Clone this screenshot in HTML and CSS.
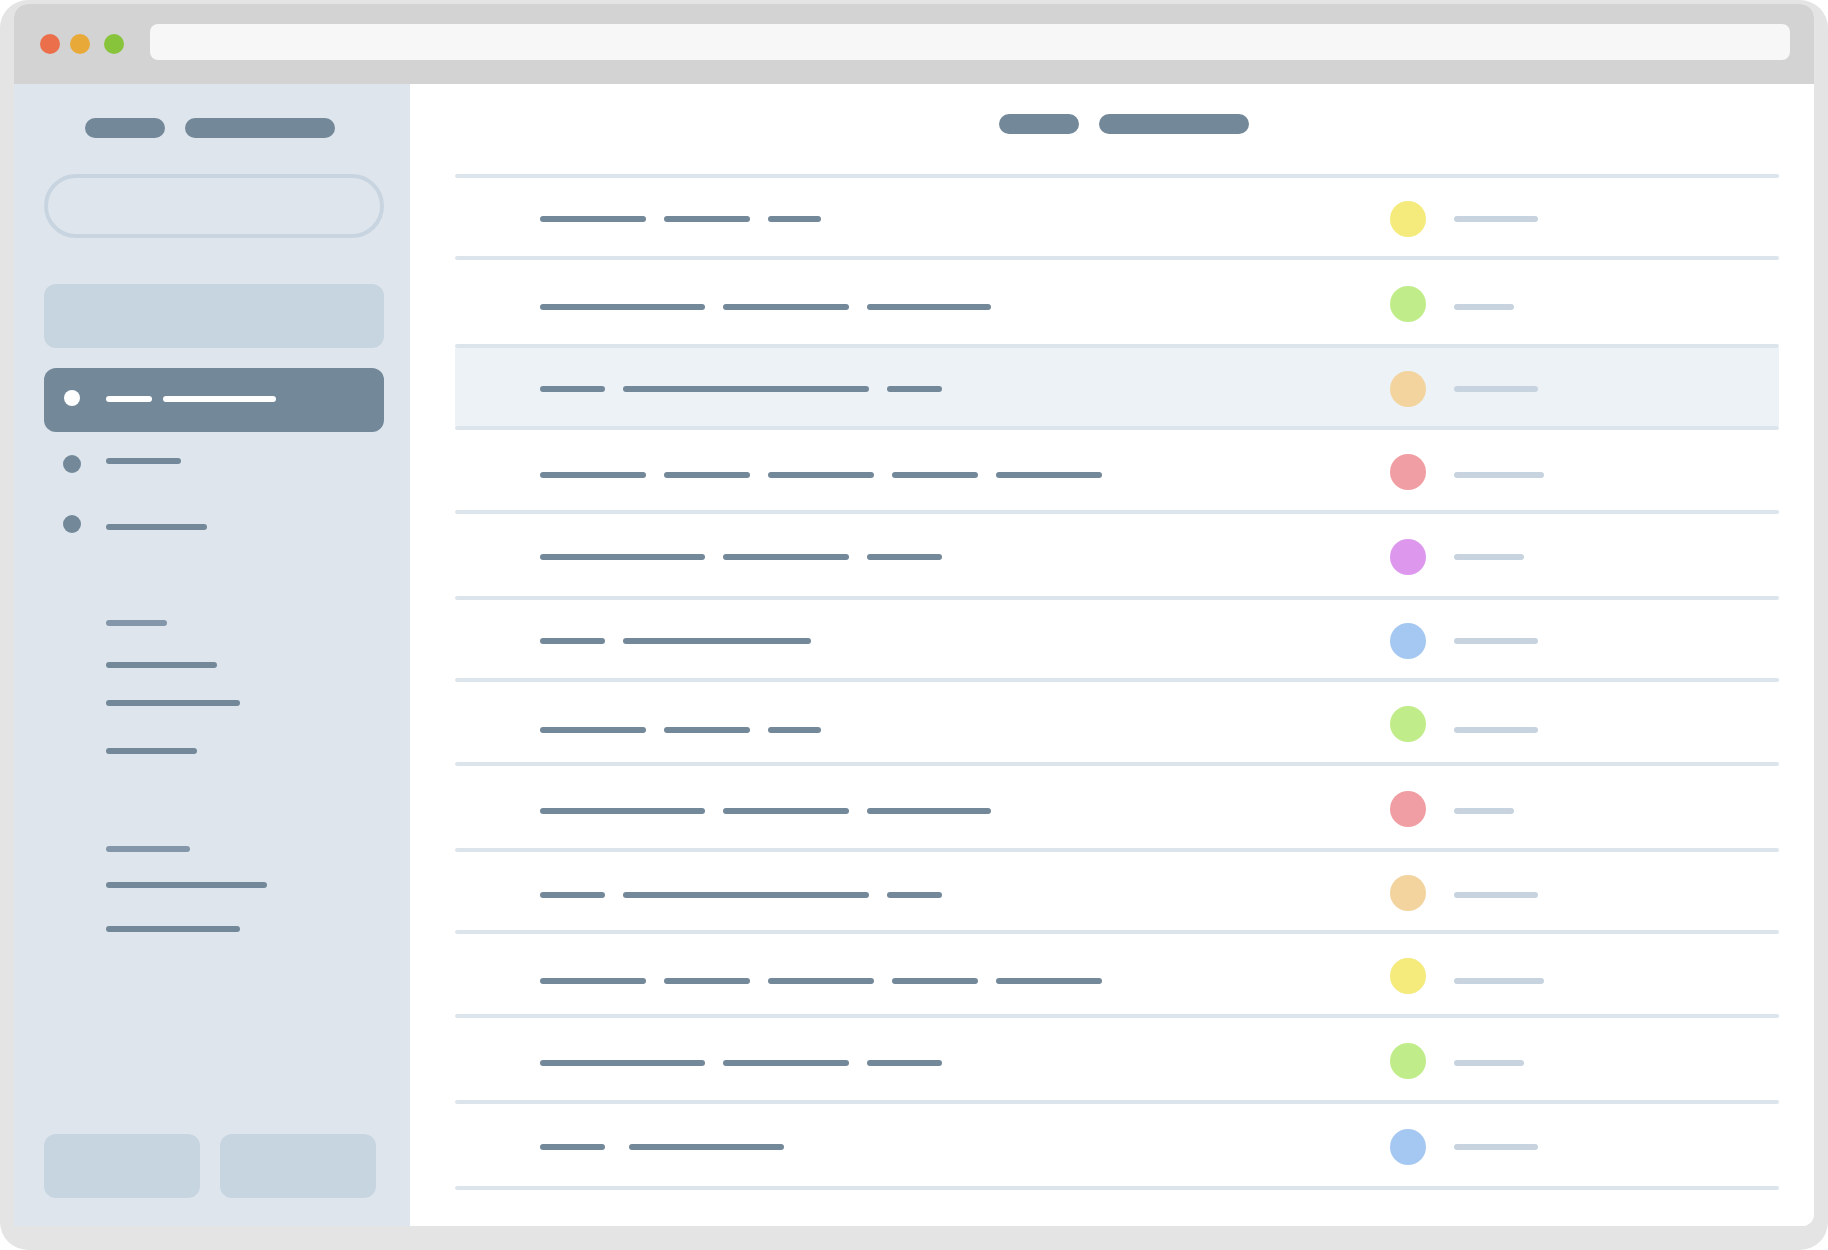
FILE: index.html
```html
<!DOCTYPE html>
<html lang="en">
<head>
<meta charset="utf-8">
<title>App wireframe</title>
<link rel="stylesheet" href="styles.css">
</head>
<body>
<div class="frame">
  <div class="window">
    <div class="titlebar">
      <div class="lights">
        <span class="light red"></span>
        <span class="light orange"></span>
        <span class="light green"></span>
      </div>
      <div class="address"></div>
    </div>
    <div class="body">
      <aside class="sidebar">
        <div class="brand">
          <span class="pill pill-s"></span>
          <span class="pill pill-l"></span>
        </div>
        <div class="search"></div>
        <div class="block"></div>
        <div class="nav-active">
          <span class="dot-white"></span>
          <span class="wline w46"></span>
          <span class="wline w113 ml11"></span>
        </div>
        <div class="nav-item mt23">
          <span class="dot"></span>
          <span class="nline off3" style="width:75px"></span>
        </div>
        <div class="nav-item mt42">
          <span class="dot"></span>
          <span class="nline off9" style="width:101px"></span>
        </div>
        <div class="sub-line light-line mt87" style="width:61px"></div>
        <div class="sub-line mt36" style="width:111px"></div>
        <div class="sub-line mt32" style="width:134px"></div>
        <div class="sub-line mt42" style="width:91px"></div>
        <div class="sub-line light-line mt92" style="width:84px"></div>
        <div class="sub-line mt30" style="width:161px"></div>
        <div class="sub-line mt38" style="width:134px"></div>
        <div class="side-footer">
          <div class="side-btn"></div>
          <div class="side-btn"></div>
        </div>
      </aside>
      <main class="main">
        <div class="main-header">
          <span class="pill pill-s"></span>
          <span class="pill pill-l"></span>
        </div>
        <div class="list">
          <div class="divider"></div>
          <div class="row h78 t38">
            <div class="cells"><span class="bar" style="width:106px"></span><span class="bar" style="width:86px"></span><span class="bar" style="width:53px"></span></div>
            <span class="avatar c-yellow"></span><span class="meta" style="width:84px"></span>
          </div>
          <div class="divider"></div>
          <div class="row h84 t44">
            <div class="cells"><span class="bar" style="width:165px"></span><span class="bar" style="width:126px"></span><span class="bar" style="width:124px"></span></div>
            <span class="avatar c-green"></span><span class="meta" style="width:60px"></span>
          </div>
          <div class="divider"></div>
          <div class="row h78 t38 selected">
            <div class="cells"><span class="bar" style="width:65px"></span><span class="bar" style="width:246px"></span><span class="bar" style="width:55px"></span></div>
            <span class="avatar c-orange"></span><span class="meta" style="width:84px"></span>
          </div>
          <div class="divider"></div>
          <div class="row h80 t42">
            <div class="cells"><span class="bar" style="width:106px"></span><span class="bar" style="width:86px"></span><span class="bar" style="width:106px"></span><span class="bar" style="width:86px"></span><span class="bar" style="width:106px"></span></div>
            <span class="avatar c-pink"></span><span class="meta" style="width:90px"></span>
          </div>
          <div class="divider"></div>
          <div class="row h82 t40">
            <div class="cells"><span class="bar" style="width:165px"></span><span class="bar" style="width:126px"></span><span class="bar" style="width:75px"></span></div>
            <span class="avatar c-purple"></span><span class="meta" style="width:70px"></span>
          </div>
          <div class="divider"></div>
          <div class="row h78 t38">
            <div class="cells"><span class="bar" style="width:65px"></span><span class="bar" style="width:188px"></span></div>
            <span class="avatar c-blue"></span><span class="meta" style="width:84px"></span>
          </div>
          <div class="divider"></div>
          <div class="row h80 t45">
            <div class="cells"><span class="bar" style="width:106px"></span><span class="bar" style="width:86px"></span><span class="bar" style="width:53px"></span></div>
            <span class="avatar c-green"></span><span class="meta" style="width:84px"></span>
          </div>
          <div class="divider"></div>
          <div class="row h82 t42">
            <div class="cells"><span class="bar" style="width:165px"></span><span class="bar" style="width:126px"></span><span class="bar" style="width:124px"></span></div>
            <span class="avatar c-pink"></span><span class="meta" style="width:60px"></span>
          </div>
          <div class="divider"></div>
          <div class="row h78 t40">
            <div class="cells"><span class="bar" style="width:65px"></span><span class="bar" style="width:246px"></span><span class="bar" style="width:55px"></span></div>
            <span class="avatar c-orange"></span><span class="meta" style="width:84px"></span>
          </div>
          <div class="divider"></div>
          <div class="row h80 t44">
            <div class="cells"><span class="bar" style="width:106px"></span><span class="bar" style="width:86px"></span><span class="bar" style="width:106px"></span><span class="bar" style="width:86px"></span><span class="bar" style="width:106px"></span></div>
            <span class="avatar c-yellow"></span><span class="meta" style="width:90px"></span>
          </div>
          <div class="divider"></div>
          <div class="row h82 t42">
            <div class="cells"><span class="bar" style="width:165px"></span><span class="bar" style="width:126px"></span><span class="bar" style="width:75px"></span></div>
            <span class="avatar c-green"></span><span class="meta" style="width:70px"></span>
          </div>
          <div class="divider"></div>
          <div class="row h82 t40">
            <div class="cells wide-gap"><span class="bar" style="width:65px"></span><span class="bar" style="width:155px"></span></div>
            <span class="avatar c-blue"></span><span class="meta" style="width:84px"></span>
          </div>
          <div class="divider"></div>
        </div>
      </main>
    </div>
  </div>
</div>
</body>
</html>
```

FILE: styles.css
```css
* { box-sizing: border-box; }

html, body {
  margin: 0;
  padding: 0;
  background: #ffffff;
  font-family: "Liberation Sans", Arial, sans-serif;
}

.frame {
  width: 1828px;
  height: 1250px;
  background: #e4e4e4;
  border-radius: 28px;
  padding: 4px 14px 24px 14px;
}

.window {
  height: 100%;
  display: flex;
  flex-direction: column;
  border-radius: 14px 14px 12px 0;
  overflow: hidden;
  background: #ffffff;
}

/* title bar */
.titlebar {
  height: 80px;
  flex: 0 0 80px;
  background: #d3d3d3;
  display: flex;
  align-items: flex-start;
  padding: 20px 24px 0 26px;
}

.lights {
  display: flex;
  align-items: center;
  height: 36px;
  margin-top: 2px;
}

.light {
  width: 20px;
  height: 20px;
  border-radius: 50%;
  display: block;
}
.light.red { background: #ec6f4c; }
.light.orange { background: #e9a938; margin-left: 10px; }
.light.green { background: #87c43b; margin-left: 14px; }

.address {
  flex: 1;
  height: 36px;
  margin-left: 26px;
  background: #f7f7f7;
  border-radius: 8px;
}

.body {
  flex: 1;
  display: flex;
  min-height: 0;
}

/* sidebar */
.sidebar {
  width: 396px;
  flex: 0 0 396px;
  background: #dee5ec;
  display: flex;
  flex-direction: column;
  padding: 34px 26px 28px 30px;
}

.pill {
  display: block;
  height: 20px;
  border-radius: 10px;
  background: #738899;
}
.pill-s { width: 80px; }
.pill-l { width: 150px; }

.brand {
  display: flex;
  gap: 20px;
  padding-left: 41px;
}

.search {
  margin-top: 36px;
  height: 64px;
  border: 4px solid #c8d5e1;
  border-radius: 32px;
}

.block {
  margin-top: 46px;
  height: 64px;
  border-radius: 12px;
  background: #c7d5e1;
}

.nav-active {
  margin-top: 20px;
  height: 64px;
  border-radius: 12px;
  background: #738899;
  display: flex;
  align-items: center;
  padding-left: 20px;
}

.dot-white {
  width: 16px;
  height: 16px;
  border-radius: 50%;
  background: #ffffff;
  margin-top: -4px;
}

.wline {
  height: 6px;
  border-radius: 3px;
  background: #ffffff;
  margin-top: -2px;
}
.w46 { width: 46px; margin-left: 26px; }
.w113 { width: 113px; }
.ml11 { margin-left: 11px; }

.nav-item {
  display: flex;
  align-items: flex-start;
  height: 18px;
  padding-left: 19px;
}

.dot {
  width: 18px;
  height: 18px;
  border-radius: 50%;
  background: #738899;
}

.nline {
  height: 6px;
  border-radius: 3px;
  background: #738899;
  margin-left: 25px;
}
.off3 { margin-top: 3px; }
.off9 { margin-top: 9px; }

.sub-line {
  height: 6px;
  border-radius: 3px;
  background: #738899;
  margin-left: 62px;
}
.sub-line.light-line { background: #8497aa; }

.mt23 { margin-top: 23px; }
.mt30 { margin-top: 30px; }
.mt32 { margin-top: 32px; }
.mt36 { margin-top: 36px; }
.mt38 { margin-top: 38px; }
.mt42 { margin-top: 42px; }
.mt87 { margin-top: 87px; }
.mt92 { margin-top: 92px; }

.side-footer {
  margin-top: auto;
  display: flex;
  gap: 20px;
}

.side-btn {
  width: 156px;
  height: 64px;
  border-radius: 12px;
  background: #c7d5e1;
}

/* main */
.main {
  flex: 1;
  display: flex;
  flex-direction: column;
  background: #ffffff;
}

.main-header {
  display: flex;
  justify-content: center;
  gap: 20px;
  padding: 30px 0 0 23px;
}

.list {
  margin: 40px 35px 0 45px;
  display: flex;
  flex-direction: column;
}

.divider {
  height: 4px;
  border-radius: 2px;
  background: #dde5ec;
}

.row {
  display: flex;
  align-items: center;
  padding-left: 85px;
  --line-top: 38px;
}
.row.selected { background: #edf2f7; }
.h78 { height: 78px; }
.h80 { height: 80px; }
.h82 { height: 82px; }
.h84 { height: 84px; }

.t38 { --line-top: 38px; }
.t40 { --line-top: 40px; }
.t42 { --line-top: 42px; }
.t44 { --line-top: 44px; }
.t45 { --line-top: 45px; }

.cells {
  width: 850px;
  display: flex;
  gap: 18px;
  align-self: flex-start;
  margin-top: var(--line-top);
}
.cells.wide-gap { gap: 24px; }

.bar {
  display: block;
  height: 6px;
  border-radius: 3px;
  background: #738899;
}

.avatar {
  width: 36px;
  height: 36px;
  border-radius: 50%;
  display: block;
  margin-top: 3px;
}
.c-yellow { background: #f5eb7c; }
.c-green { background: #c0ed89; }
.c-orange { background: #f3d49e; }
.c-pink { background: #f09ea4; }
.c-purple { background: #dd98ee; }
.c-blue { background: #a4c8f1; }

.meta {
  display: block;
  height: 6px;
  border-radius: 3px;
  background: #c7d4e0;
  margin-left: 28px;
  align-self: flex-start;
  margin-top: var(--line-top);
}
```
